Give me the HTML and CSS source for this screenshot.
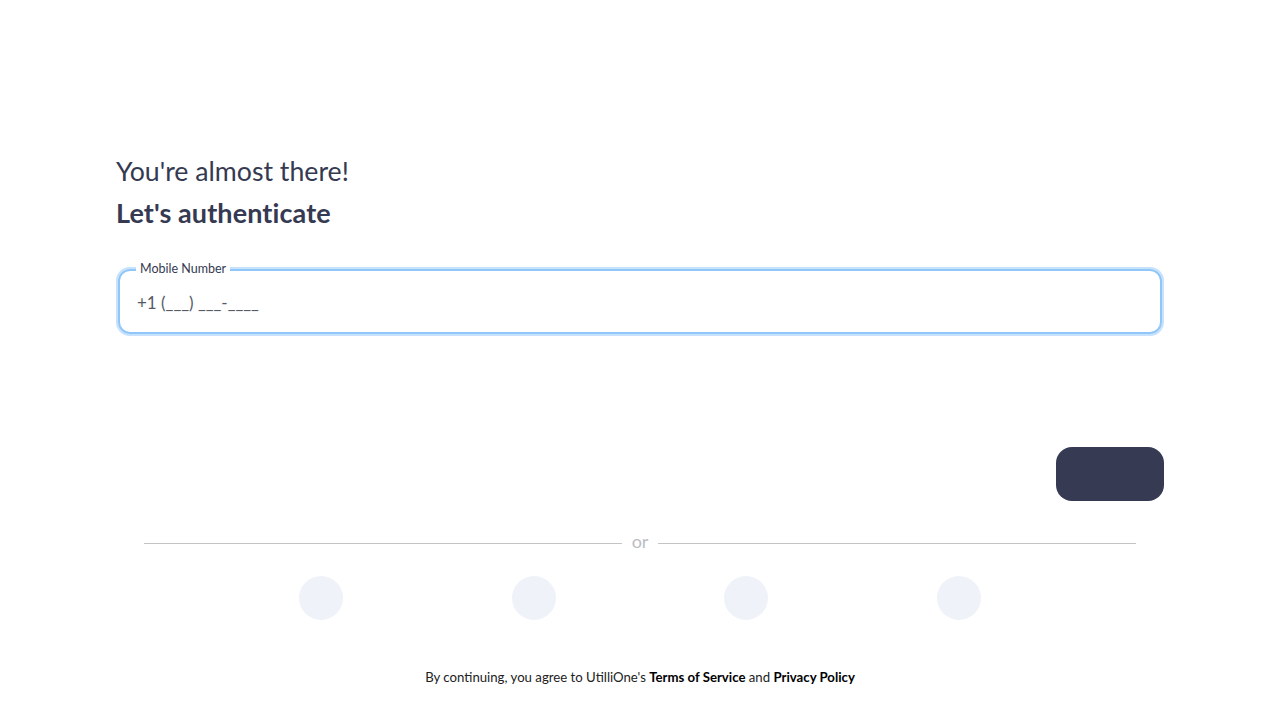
FILE: index.html
```html
<!DOCTYPE html>
<html>
<head>
<meta charset="utf-8">
<link rel="stylesheet" href="styles.css">
</head>
<body>
<main class="page">
  <section class="intro">
    <h1 class="title">You're almost there!</h1>
    <h2 class="subtitle">Let's authenticate</h2>
  </section>
  <div class="field">
    <span class="field-label">Mobile Number</span>
    <div class="field-value">+1 (___) ___-____</div>
  </div>
  <div class="actions">
    <button class="next-btn" type="button"></button>
  </div>
  <div class="divider">
    <span class="divider-line"></span>
    <span class="divider-text">or</span>
    <span class="divider-line"></span>
  </div>
  <div class="socials">
    <span class="social"></span>
    <span class="social"></span>
    <span class="social"></span>
    <span class="social"></span>
  </div>
  <p class="terms">By continuing, you agree to UtilliOne's <b>Terms of Service</b> and <b>Privacy Policy</b></p>
</main>
</body>
</html>
```
FILE: styles.css
```css
html, body {
  margin: 0;
  padding: 0;
  background: #ffffff;
  font-family: Lato, "Liberation Sans", sans-serif;
}
.page {
  width: 1280px;
  height: 720px;
  box-sizing: border-box;
  padding: 155px 116px 0;
  display: flex;
  flex-direction: column;
}
.intro {
  display: flex;
  flex-direction: column;
}
.title {
  margin: 0;
  font-size: 26.7px;
  font-weight: 400;
  line-height: 32px;
  color: #353a52;
}
.subtitle {
  margin: 10px 0 0;
  font-size: 27px;
  font-weight: 700;
  line-height: 32px;
  color: #353a52;
  letter-spacing: 0.1px;
}
.field {
  position: relative;
  margin: 40px 2px 0;
  padding: 0 17px;
  height: 61px;
  border: 2px solid #90c6f8;
  border-radius: 12px;
  box-shadow: 0 0 0 2px #c6e2fc;
  display: flex;
  align-items: center;
}
.field-label {
  position: absolute;
  left: 16px;
  top: -10px;
  padding: 0 4px;
  background: #ffffff;
  font-size: 12.5px;
  line-height: 16px;
  color: #353a52;
}
.field-value {
  margin-top: 2px;
  font-size: 17px;
  color: #555a66;
}
.actions {
  display: flex;
  justify-content: flex-end;
  margin-top: 113px;
}
.next-btn {
  width: 108px;
  height: 54px;
  border: none;
  border-radius: 16px;
  background: #363a52;
  padding: 0;
}
.divider {
  display: flex;
  align-items: center;
  gap: 10px;
  margin: 33px 28px 0;
}
.divider-line {
  flex: 1;
  height: 1px;
  background: #c4c4c4;
}
.divider-text {
  font-size: 18px;
  line-height: 22px;
  color: #bdbdc3;
  margin-top: -4px;
}
.socials {
  display: flex;
  justify-content: center;
  gap: 168.67px;
  margin-top: 24px;
}
.social {
  width: 44px;
  height: 44px;
  border-radius: 50%;
  background: #eff2f9;
}
.terms {
  margin: 49px 0 0;
  text-align: center;
  font-size: 13.2px;
  line-height: 16px;
  color: #222222;
}
.terms b {
  color: #000000;
  font-weight: 700;
}
```
